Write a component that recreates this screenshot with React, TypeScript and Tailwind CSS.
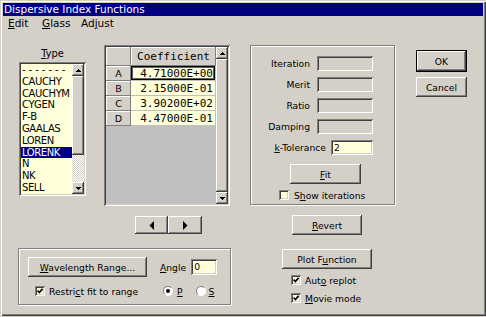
import type { ReactNode } from 'react'

// Win2000-style bevels
const raised =
  'bg-[#d4d0c8] shadow-[inset_-1px_-1px_0_#404040,inset_1px_1px_0_#ffffff,inset_-2px_-2px_0_#808080,inset_2px_2px_0_#d4d0c8]'
const sunken =
  'shadow-[inset_1px_1px_0_#808080,inset_-1px_-1px_0_#ffffff,inset_2px_2px_0_#404040,inset_-2px_-2px_0_#d4d0c8]'
const headerCell = 'bg-[#d4d0c8] shadow-[inset_-1px_-1px_0_#808080,inset_1px_1px_0_#ffffff]'
const etched = 'border border-[#808080] shadow-[inset_1px_1px_0_#ffffff,1px_1px_0_#ffffff]'

const types = ['-------', 'CAUCHY', 'CAUCHYM', 'CYGEN', 'F-B', 'GAALAS', 'LOREN', 'LORENK', 'N', 'NK', 'SELL']
const coefficients = [
  { key: 'A', value: '4.71000E+00' },
  { key: 'B', value: '2.15000E-01' },
  { key: 'C', value: '3.90200E+02' },
  { key: 'D', value: '4.47000E-01' },
]
const fitFields = ['Iteration', 'Merit', 'Ratio', 'Damping']

function Key({ children }: { children: ReactNode }) {
  return <span className="underline underline-offset-1">{children}</span>
}

function ScrollButton({ down = false }: { down?: boolean }) {
  return (
    <div className={`${raised} w-[12px] h-[12px] shrink-0 flex items-center justify-center`}>
      <svg width="5" height="3" viewBox="0 0 5 3" shapeRendering="crispEdges" className={down ? 'rotate-180' : ''}>
        <rect x="2" y="0" width="1" height="1" fill="#000" />
        <rect x="1" y="1" width="3" height="1" fill="#000" />
        <rect x="0" y="2" width="5" height="1" fill="#000" />
      </svg>
    </div>
  )
}

function Check({ checked = false }: { checked?: boolean }) {
  return (
    <span className={`${sunken} bg-[#ffffd9] w-[10px] h-[10px] shrink-0 flex items-center justify-center`}>
      {checked && (
        <svg width="6" height="6" viewBox="0 0 6 6">
          <path d="M0.6 2.6 L2.4 4.5 L5.6 0.8" fill="none" stroke="#000" strokeWidth="1.7" />
        </svg>
      )}
    </span>
  )
}

function Radio({ checked = false }: { checked?: boolean }) {
  return (
    <span className="w-[10px] h-[10px] shrink-0 rounded-full bg-white border border-[#808080] border-r-white border-b-white flex items-center justify-center">
      {checked && <span className="w-[4px] h-[4px] rounded-full bg-black" />}
    </span>
  )
}

export default function App() {
  return (
    <div className="w-[486px] h-[317px] bg-[#d4d0c8]">
      <div className="w-[486px] h-[316px] bg-[#d4d0c8] text-black font-['DejaVu_Sans',sans-serif] text-[9.2px] leading-[11px] flex flex-col overflow-hidden shadow-[inset_1px_1px_0_#d4d0c8,inset_2px_2px_0_#ffffff,inset_-1px_-1px_0_#404040,inset_-2px_-2px_0_#808080]">
        {/* title bar */}
        <div className="mx-[3px] mt-[3px] h-[13px] bg-[#000080] text-white text-[10.5px] leading-[13px] pl-[1px] whitespace-nowrap">
          Dispersive Index Functions
        </div>

        {/* menu */}
        <div className="h-[15px] flex items-center pl-[8px] text-[10.5px]">
          <span className="w-[34px]"><Key>E</Key>dit</span>
          <span className="w-[39px]"><Key>G</Key>lass</span>
          <span>Ad<Key>j</Key>ust</span>
        </div>

        <div className="flex items-start">
          {/* left column */}
          <div className="ml-[18px] w-[213px] flex flex-col">
            <div className="flex items-start">
              <div className="ml-[1px] mt-[17px] w-[67px] flex flex-col">
                <div className="h-[12px] leading-[12px] text-center text-[9.8px]">
                  <Key>T</Key>ype
                </div>
                <div className={`${sunken} bg-[#ffffd9] mt-[2px] h-[134px] p-[2px] flex`}>
                  <div className="flex-1 overflow-hidden text-[10px] tracking-[-0.4px] leading-[11.8px]">
                    {types.map((t) => (
                      <div
                        key={t}
                        className={`h-[11.8px] pl-[1px] whitespace-nowrap ${t === 'LORENK' ? 'bg-[#000080] text-white' : ''} ${t === '-------' ? 'tracking-[3px]' : ''}`}
                      >
                        {t}
                      </div>
                    ))}
                  </div>
                  <div className="w-[12px] flex flex-col">
                    <ScrollButton />
                    <div className={`${raised} h-[79px]`} />
                    <div className="flex-1 bg-[repeating-conic-gradient(#d4d0c8_0_25%,#ffffff_0_50%)] bg-[length:2px_2px]" />
                    <ScrollButton down />
                  </div>
                </div>
              </div>

              {/* coefficient grid */}
              <div className={`${sunken} ml-[18px] mt-[14px] w-[126px] h-[161px] p-[2px] flex`}>
                <div className="flex-1 bg-[#c0c0c0] flex flex-col font-['DejaVu_Sans_Mono',monospace] text-[11px]">
                  <div className="flex h-[19px]">
                    <div className={`${headerCell} w-[25px]`} />
                    <div className={`${headerCell} flex-1 flex items-center justify-center`}>Coefficient</div>
                  </div>
                  {coefficients.map((c, i) => (
                    <div key={c.key} className="flex h-[15px]">
                      <div className={`${headerCell} w-[25px] flex items-center justify-center font-['DejaVu_Sans',sans-serif] text-[9.5px]`}>
                        {c.key}
                      </div>
                      <div className="flex-1 border-b border-r border-[#c0c0c0] bg-[#ffffd9]">
                        <div
                          className={`h-full flex items-center justify-end pr-[2px] ${i === 0 ? 'shadow-[inset_0_0_0_1px_#000000,inset_0_0_0_2px_#606060]' : ''}`}
                        >
                          {c.value}
                        </div>
                      </div>
                    </div>
                  ))}
                </div>
                <div className="w-[12px] flex flex-col">
                  <ScrollButton />
                  <div className={`${raised} flex-1`} />
                  <ScrollButton down />
                </div>
              </div>
            </div>

            <div className="flex ml-[117px] mt-[10px]">
              <button className={`${raised} w-[33px] h-[18px] flex items-center justify-center`}>
                <svg width="5" height="9" viewBox="0 0 5 9">
                  <path d="M5 0 V9 L0.5 4.5 Z" fill="#000" />
                </svg>
              </button>
              <button className={`${raised} w-[34px] h-[18px] flex items-center justify-center`}>
                <svg width="5" height="9" viewBox="0 0 5 9">
                  <path d="M0 0 V9 L4.5 4.5 Z" fill="#000" />
                </svg>
              </button>
            </div>

            {/* wavelength group */}
            <div className={`${etched} mt-[14px] h-[57px] pl-[9px] pt-[8px] flex flex-col`}>
              <div className="flex items-center h-[20px]">
                <button className={`${raised} w-[119px] h-[20px] flex items-center justify-center`}>
                  <span><Key>W</Key>avelength Range...</span>
                </button>
                <span className="ml-[13px]"><Key>A</Key>ngle</span>
                <div className={`${sunken} bg-[#ffffd9] ml-[5px] w-[26px] h-[16px] pl-[3px] leading-[16px]`}>0</div>
              </div>
              <div className="flex items-center mt-[9px] h-[10px] pl-[7px]">
                <Check checked />
                <span className="ml-[4px] w-[114px] whitespace-nowrap">Restri<Key>c</Key>t fit to range</span>
                <Radio checked />
                <span className="ml-[4px]"><Key>P</Key></span>
                <span className="ml-[13px]"><Radio /></span>
                <span className="ml-[3px]"><Key>S</Key></span>
              </div>
            </div>
          </div>

          {/* fit column */}
          <div className="ml-[19px] mt-[14px] w-[145px] flex flex-col">
            <div className={`${etched} h-[160px] pt-[10px] flex flex-col`}>
              {fitFields.map((f) => (
                <div key={f} className="flex items-center justify-end pr-[21px] h-[15px] mb-[6px]">
                  <span>{f}</span>
                  <div className={`${sunken} ml-[7px] w-[56px] h-[15px]`} />
                </div>
              ))}
              <div className="flex items-center justify-end pr-[21px] h-[15px]">
                <span><Key>k</Key>-Tolerance</span>
                <div className={`${sunken} bg-[#ffffd9] ml-[5px] w-[42px] h-[15px] pl-[3px] leading-[15px]`}>2</div>
              </div>
              <button className={`${raised} mt-[9px] ml-[39px] w-[71px] h-[20px] flex items-center justify-center`}>
                <span><Key>F</Key>it</span>
              </button>
              <div className="flex items-center mt-[6px] ml-[28px] h-[10px]">
                <Check />
                <span className="ml-[5px]">S<Key>h</Key>ow iterations</span>
              </div>
            </div>

            <button className={`${raised} mt-[10px] ml-[42px] w-[70px] h-[20px] flex items-center justify-center`}>
              <span><Key>R</Key>evert</span>
            </button>
            <button className={`${raised} mt-[14px] ml-[32px] w-[90px] h-[20px] flex items-center justify-center`}>
              <span>Plot F<Key>u</Key>nction</span>
            </button>
            <div className="flex items-center mt-[6px] ml-[41px] h-[10px]">
              <Check checked />
              <span className="ml-[4px]">Aut<Key>o</Key> replot</span>
            </div>
            <div className="flex items-center mt-[8px] ml-[41px] h-[10px]">
              <Check checked />
              <span className="ml-[4px]"><Key>M</Key>ovie mode</span>
            </div>
          </div>

          {/* dialog buttons */}
          <div className="ml-[21px] mt-[19px] flex flex-col">
            <div className="border border-black w-[51px] h-[22px]">
              <button className={`${raised} w-full h-full flex items-center justify-center`}>OK</button>
            </div>
            <button className={`${raised} mt-[5px] w-[51px] h-[20px] flex items-center justify-center`}>Cancel</button>
          </div>
        </div>
      </div>
    </div>
  )
}
